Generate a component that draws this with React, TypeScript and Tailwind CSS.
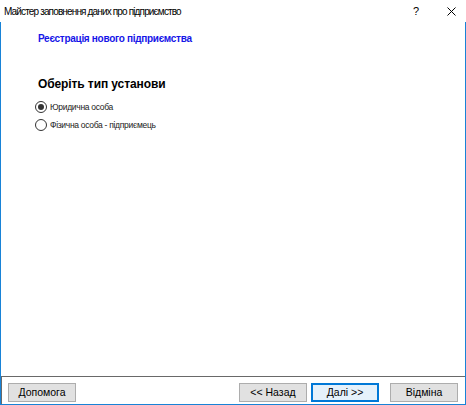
import { useState } from 'react'

const font = { fontFamily: '"Liberation Sans", "Noto Sans", Arial, sans-serif' }

function Radio({ checked, label, onClick }: { checked: boolean; label: string; onClick: () => void }) {
  return (
    <div className="flex items-center h-[18px] cursor-default" onClick={onClick}>
      <div className="w-[12px] h-[12px] rounded-full border border-[#333333] bg-white flex items-center justify-center">
        {checked && <div className="w-[6px] h-[6px] rounded-full bg-[#333333]" />}
      </div>
      <span className="ml-[3px] text-[8.5px] tracking-[-0.3px] text-[#1a1a1a]">{label}</span>
    </div>
  )
}

function Button({ label, primary }: { label: string; primary?: boolean }) {
  return (
    <button
      className={
        primary
          ? 'w-[68px] h-[19px] bg-[#e5f1fb] border-2 border-[#0078d7] text-[10.5px] text-black leading-none'
          : 'w-[68px] h-[19px] bg-[#e1e1e1] border border-[#adadad] text-[10.5px] text-black leading-none'
      }
    >
      {label}
    </button>
  )
}

export default function App() {
  const [kind, setKind] = useState(0)

  return (
    <div className="w-[466px] h-[405px] flex flex-col bg-white select-none" style={font}>
      {/* title bar */}
      <div className="h-[22px] flex items-center bg-white">
        <span className="ml-[4px] text-[10px] tracking-[-0.85px] text-black">Майстер заповнення даних про підприємство</span>
        <div className="flex-1" />
        <span className="w-[10px] text-center text-[11px] text-black">?</span>
        <svg className="ml-[26px] mr-[10px]" width="9" height="9" viewBox="0 0 9 9">
          <path d="M0.5 0.5 L8.5 8.5 M8.5 0.5 L0.5 8.5" stroke="#000" strokeWidth="1" />
        </svg>
      </div>

      <div className="flex-1 flex flex-col border-x border-b border-[#1883d7]">
        <div className="flex-1 pl-[37px] bg-white">
          <div className="mt-[9px] h-[14px] text-[10px] font-bold tracking-[-0.3px] text-[#1515e8]">
            Реєстрація нового підприємства
          </div>
          <div className="mt-[30px] text-[12px] font-bold tracking-[-0.1px] text-black">Оберіть тип установи</div>
          <div className="mt-[5px] -ml-[3px] flex flex-col">
            <Radio checked={kind === 0} label="Юридична особа" onClick={() => setKind(0)} />
            <Radio checked={kind === 1} label="Фізична особа - підприємець" onClick={() => setKind(1)} />
          </div>
        </div>

        <div className="h-[28px] border-t border-l border-[#696969] bg-white flex items-start pt-[6px] pl-[6px] pr-[7px]">
          <Button label="Допомога" />
          <div className="flex-1" />
          <Button label="<< Назад" />
          <div className="w-[4px]" />
          <Button label="Далі >>" primary />
          <div className="w-[11px]" />
          <Button label="Відміна" />
        </div>
      </div>
    </div>
  )
}
